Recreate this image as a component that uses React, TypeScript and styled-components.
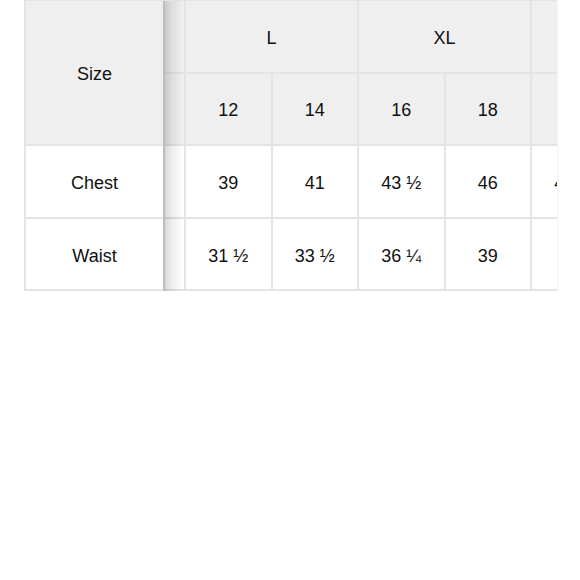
import { useLayoutEffect, useRef } from 'react';
import { createGlobalStyle, styled } from 'styled-components';

interface SizeGroup {
  label: string;
  sizes: string[];
}

interface Measure {
  name: string;
  values: string[];
}

const groups: SizeGroup[] = [
  { label: 'M', sizes: ['8', '10'] },
  { label: 'L', sizes: ['12', '14'] },
  { label: 'XL', sizes: ['16', '18'] },
  { label: 'XXL', sizes: ['20', '22'] },
];

const measures: Measure[] = [
  { name: 'Chest', values: ['35', '37', '39', '41', '43 ½', '46', '48 ½', '51'] },
  { name: 'Waist', values: ['27 ½', '29 ½', '31 ½', '33 ½', '36 ¼', '39', '42', '45'] },
];

const App = () => {
  const frameRef = useRef<HTMLDivElement>(null);

  // the chart opens already scrolled to the L column
  useLayoutEffect(() => {
    if (frameRef.current) frameRef.current.scrollLeft = 152;
  }, []);

  return (
    <>
      <GlobalStyle />
      <Frame ref={frameRef}>
        <Chart>
          <thead>
            <tr>
              <StickyCell as="th" rowSpan={2} $head>
                Size
              </StickyCell>
              {groups.map((group) => (
                <Cell as="th" key={group.label} colSpan={group.sizes.length} $head>
                  {group.label}
                </Cell>
              ))}
            </tr>
            <tr>
              {groups.flatMap((group) =>
                group.sizes.map((size) => (
                  <Cell as="th" key={size} $head>
                    {size}
                  </Cell>
                )),
              )}
            </tr>
          </thead>
          <tbody>
            {measures.map((measure) => (
              <tr key={measure.name}>
                <StickyCell>{measure.name}</StickyCell>
                {measure.values.map((value, i) => (
                  <Cell key={i}>{value}</Cell>
                ))}
              </tr>
            ))}
          </tbody>
        </Chart>
      </Frame>
    </>
  );
};

const GlobalStyle = createGlobalStyle`
  body {
    margin: 0;
    background: #fff;
    font-family: "Liberation Sans", Arial, Helvetica, sans-serif;
    color: #111;
  }
`;

const Frame = styled.div`
  margin-left: 24px;
  width: 533px;
  overflow-x: auto;
  scrollbar-width: none;
  box-shadow: 1px 1px 2px rgba(0, 0, 0, 0.06);

  &::-webkit-scrollbar {
    display: none;
  }
`;

const Chart = styled.table`
  border-collapse: separate;
  border-spacing: 0;
  table-layout: fixed;
  border-top: 1px solid #e4e4e4;
`;

const Cell = styled.td<{ $head?: boolean }>`
  box-sizing: border-box;
  min-width: 86.5px;
  width: 86.5px;
  height: 72.6px;
  padding: 4px 0 0;
  text-align: center;
  vertical-align: middle;
  font-size: 18px;
  font-weight: 400;
  white-space: nowrap;
  border-right: 2px solid #e4e4e4;
  border-bottom: 2px solid #e4e4e4;
  background: ${({ $head }) => ($head ? '#efefef' : '#fff')};
`;

const StickyCell = styled(Cell)`
  position: sticky;
  left: 0;
  z-index: 2;
  min-width: 141px;
  width: 141px;
  border-left: 2px solid #e4e4e4;

  &::after {
    content: '';
    position: absolute;
    top: 0;
    bottom: -2px;
    left: 100%;
    width: 20px;
    pointer-events: none;
    background: linear-gradient(
      to right,
      rgba(0, 0, 0, 0.18),
      rgba(0, 0, 0, 0.08) 40%,
      rgba(0, 0, 0, 0)
    );
  }
`;

export default App;
